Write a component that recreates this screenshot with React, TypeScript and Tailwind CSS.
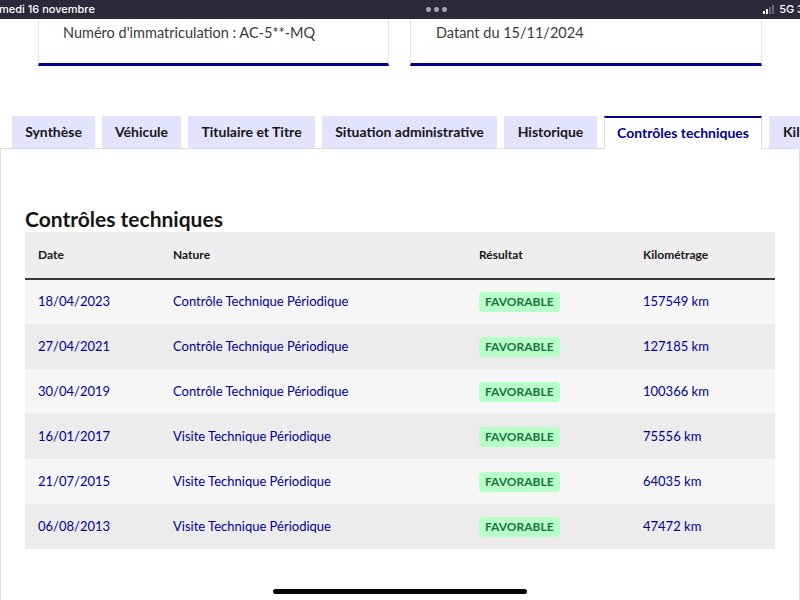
import React from "react";

const rows = [
  { date: "18/04/2023", nature: "Contrôle Technique Périodique", km: "157549 km" },
  { date: "27/04/2021", nature: "Contrôle Technique Périodique", km: "127185 km" },
  { date: "30/04/2019", nature: "Contrôle Technique Périodique", km: "100366 km" },
  { date: "16/01/2017", nature: "Visite Technique Périodique", km: "75556 km" },
  { date: "21/07/2015", nature: "Visite Technique Périodique", km: "64035 km" },
  { date: "06/08/2013", nature: "Visite Technique Périodique", km: "47472 km" },
];

const tabs = [
  { label: "Synthèse", w: "w-[83px]" },
  { label: "Véhicule", w: "w-[79px]" },
  { label: "Titulaire et Titre", w: "w-[127px]" },
  { label: "Situation administrative", w: "w-[175px]" },
  { label: "Historique", w: "w-[93px]" },
];

function StatusBar() {
  return (
    <div className="flex h-[19px] items-center justify-between bg-[#2a2839] text-[11px] font-medium text-white font-['Inter','Liberation_Sans',sans-serif]">
      <span className="-ml-[1px]">medi 16 novembre</span>
      <span className="flex gap-[3px] pl-[14px]">
        <span className="h-[5px] w-[5px] rounded-full bg-[#a9a7b6]" />
        <span className="h-[5px] w-[5px] rounded-full bg-[#a9a7b6]" />
        <span className="h-[5px] w-[5px] rounded-full bg-[#a9a7b6]" />
      </span>
      <span className="flex items-center gap-[5px] -mr-[4px]">
        <span className="flex items-end gap-[1px]">
          <span className="h-[3px] w-[2px] bg-white" />
          <span className="h-[5px] w-[2px] bg-white" />
          <span className="h-[7px] w-[2px] bg-[#6b6979]" />
          <span className="h-[9px] w-[2px] bg-[#6b6979]" />
        </span>
        <span>5G 3</span>
      </span>
    </div>
  );
}

export default function App() {
  return (
    <div className="relative h-[600px] w-[800px] overflow-hidden bg-white font-['Lato',sans-serif] text-[#161616]">
      <StatusBar />

      <div className="flex gap-[21px] pl-[38px]">
        <div className="h-[47px] w-[351px] border-x border-b-[3px] border-x-[#e5e5e5] border-b-[#000091] pl-[24px] pt-[3px] text-[14.5px] text-[#3a3a3a]">
          Numéro d'immatriculation : AC-5**-MQ
        </div>
        <div className="h-[47px] w-[352px] border-x border-b-[3px] border-x-[#e5e5e5] border-b-[#000091] pl-[25px] pt-[3px] text-[14.5px] text-[#3a3a3a]">
          Datant du 15/11/2024
        </div>
      </div>

      <div className="mt-[50px] flex items-end gap-[7px] pl-[12px]">
        {tabs.map((t) => (
          <div
            key={t.label}
            className={`${t.w} flex h-[32px] shrink-0 items-center justify-center bg-[#e3e3fd] pb-[2px] text-[14px] font-bold text-[#161616]`}
          >
            {t.label}
          </div>
        ))}
        <div className="relative z-10 -mb-px flex h-[33px] w-[158px] shrink-0 items-center justify-center border-x border-t-2 border-x-[#dddddd] border-t-[#000091] bg-white pb-[3px] text-[14px] font-bold text-[#000091]">
          Contrôles techniques
        </div>
        <div className="flex h-[32px] w-[60px] shrink-0 items-center bg-[#e3e3fd] pb-[2px] pl-[14px] text-[14px] font-bold text-[#161616]">
          Kilométrage
        </div>
      </div>

      <div className="h-[460px] border border-[#dddddd] px-[24px] pt-[58px]">
        <h2 className="h-[25px] text-[21px] leading-[24px] font-bold text-[#161616]">
          Contrôles techniques
        </h2>
        <table className="w-[750px] table-fixed border-collapse text-left">
          <thead>
            <tr className="h-[47px] border-b-2 border-[#3a3a3a] bg-[#eeeeee] text-[12px] font-bold text-[#161616]">
              <th className="w-[135px] pl-[13px]">Date</th>
              <th className="w-[306px] pl-[13px]">Nature</th>
              <th className="w-[164px] pl-[13px]">Résultat</th>
              <th className="pl-[13px]">Kilométrage</th>
            </tr>
          </thead>
          <tbody>
            {rows.map((r, i) => (
              <tr
                key={r.date}
                className={`h-[45px] text-[13px] text-[#000091] ${i % 2 === 0 ? "bg-[#f6f6f6]" : "bg-[#ececec]"}`}
              >
                <td className="pl-[13px]">{r.date}</td>
                <td className="pl-[13px]">{r.nature}</td>
                <td className="pl-[13px]">
                  <span className="inline-flex h-[20px] items-center rounded-[4px] bg-[#b8fec9] px-[6px] text-[12px] font-bold text-[#18753c]">
                    FAVORABLE
                  </span>
                </td>
                <td className="pl-[13px]">{r.km}</td>
              </tr>
            ))}
          </tbody>
        </table>
      </div>

      <div className="absolute bottom-[6px] left-[273px] h-[5px] w-[254px] rounded-full bg-black" />
    </div>
  );
}
